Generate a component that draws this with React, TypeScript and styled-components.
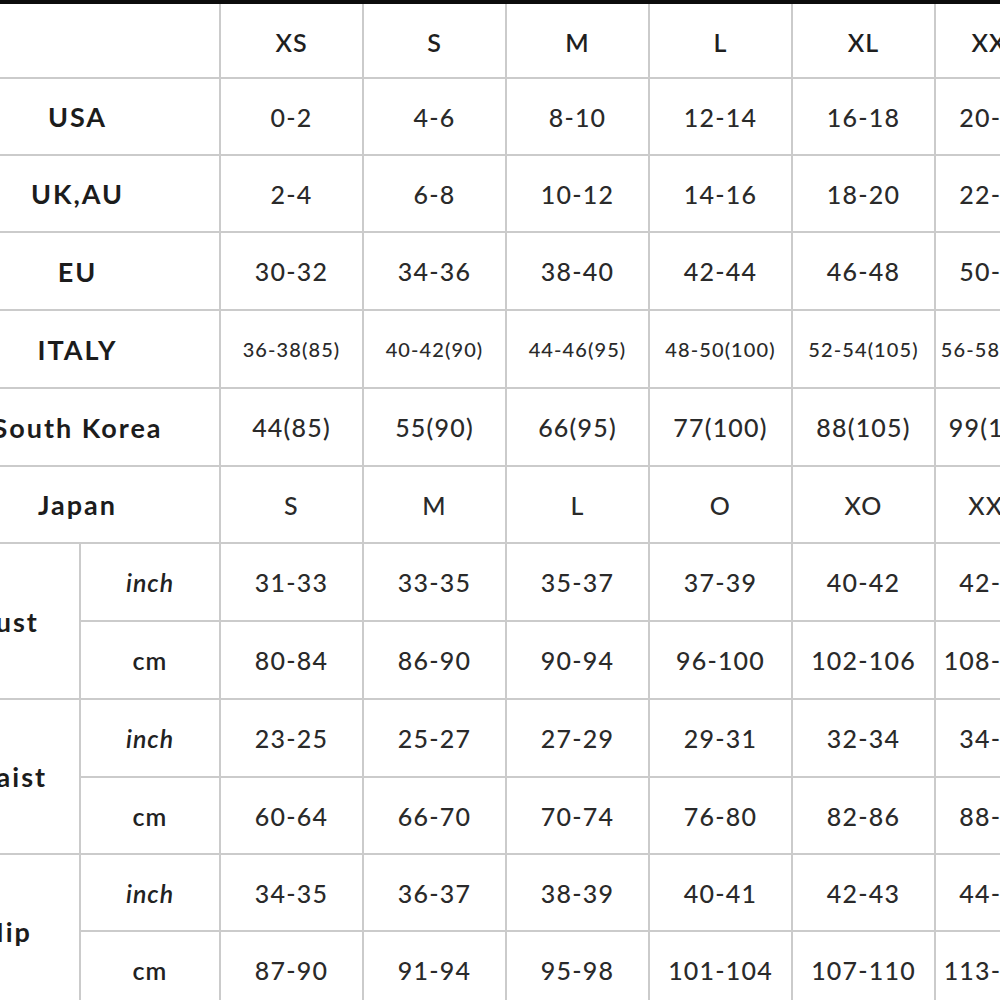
import React from "react";
import styled, { createGlobalStyle } from "styled-components";

const Global = createGlobalStyle`
  html, body { margin: 0; padding: 0; background: #ffffff; overflow: hidden; }
  body { font-family: Lato, "Open Sans", "Liberation Sans", sans-serif; color: #262626; }
`;

const Page = styled.div`
  width: 1000px;
  height: 1000px;
  overflow: hidden;
  background: #fff;
  display: flex;
  flex-direction: column;
`;

const TopBar = styled.div`
  height: 4px;
  flex: 0 0 4px;
  background: #0c0c0c;
`;

const Viewport = styled.div`
  flex: 1;
  overflow: hidden;
`;

const Grid = styled.div`
  margin-left: -64px;
  width: max-content;
  display: grid;
  grid-template-columns: 143px 138px repeat(5, 141px) 120px;
  grid-template-rows: 73px 75px 75px 76px 76px 76px 75px 76px 76px 76px 75px 75px 76px;
  gap: 2px;
  background: #cbcbcb;
`;

const Cell = styled.div`
  background: #fff;
  display: flex;
  align-items: center;
  justify-content: center;
  white-space: nowrap;
`;

const Corner = styled(Cell)`
  grid-column: span 2;
`;

const Head = styled(Cell)`
  font-size: 25px;
  font-weight: 600;
  letter-spacing: 1px;
  color: #1f1f1f;
  padding-top: 2px;
`;

const RowLabel = styled(Cell)`
  grid-column: span 2;
  font-size: 27px;
  font-weight: 700;
  letter-spacing: 2px;
  color: #1c1c1c;
`;

const GroupLabel = styled(Cell)`
  grid-row: span 2;
  font-size: 27px;
  font-weight: 700;
  letter-spacing: 2px;
  color: #1c1c1c;
`;

const Unit = styled(Cell)`
  font-size: 25px;
  font-weight: 600;
  font-style: italic;
  letter-spacing: 1px;
  color: #222;
`;

const UnitPlain = styled(Unit)`
  font-style: normal;
`;

const Value = styled(Cell)<{ $small?: boolean }>`
  font-size: ${(p) => (p.$small ? "20px" : "25px")};
  font-weight: 500;
  letter-spacing: ${(p) => (p.$small ? "1.1px" : "1.2px")};
  color: #2a2a2a;
`;

const sizes = ["XS", "S", "M", "L", "XL", "XXL"];

const simpleRows: { label: string; values: string[]; small?: boolean }[] = [
  { label: "USA", values: ["0-2", "4-6", "8-10", "12-14", "16-18", "20-22"] },
  { label: "UK,AU", values: ["2-4", "6-8", "10-12", "14-16", "18-20", "22-24"] },
  { label: "EU", values: ["30-32", "34-36", "38-40", "42-44", "46-48", "50-52"] },
  {
    label: "ITALY",
    values: ["36-38(85)", "40-42(90)", "44-46(95)", "48-50(100)", "52-54(105)", "56-58(110)"],
    small: true,
  },
  { label: "South Korea", values: ["44(85)", "55(90)", "66(95)", "77(100)", "88(105)", "99(110)"] },
  { label: "Japan", values: ["S", "M", "L", "O", "XO", "XXO"] },
];

const groups: { label: string; inch: string[]; cm: string[] }[] = [
  {
    label: "Bust",
    inch: ["31-33", "33-35", "35-37", "37-39", "40-42", "42-44"],
    cm: ["80-84", "86-90", "90-94", "96-100", "102-106", "108-112"],
  },
  {
    label: "Waist",
    inch: ["23-25", "25-27", "27-29", "29-31", "32-34", "34-36"],
    cm: ["60-64", "66-70", "70-74", "76-80", "82-86", "88-92"],
  },
  {
    label: "Hip",
    inch: ["34-35", "36-37", "38-39", "40-41", "42-43", "44-45"],
    cm: ["87-90", "91-94", "95-98", "101-104", "107-110", "113-116"],
  },
];

export default function App() {
  return (
    <Page>
      <Global />
      <TopBar />
      <Viewport>
        <Grid>
          <Corner />
          {sizes.map((s) => (
            <Head key={s}>{s}</Head>
          ))}
          {simpleRows.map((r) => (
            <React.Fragment key={r.label}>
              <RowLabel>{r.label}</RowLabel>
              {r.values.map((v, i) => (
                <Value key={i} $small={r.small}>
                  {v}
                </Value>
              ))}
            </React.Fragment>
          ))}
          {groups.map((g) => (
            <React.Fragment key={g.label}>
              <GroupLabel>{g.label}</GroupLabel>
              <Unit>inch</Unit>
              {g.inch.map((v, i) => (
                <Value key={"i" + i}>{v}</Value>
              ))}
              <UnitPlain>cm</UnitPlain>
              {g.cm.map((v, i) => (
                <Value key={"c" + i}>{v}</Value>
              ))}
            </React.Fragment>
          ))}
        </Grid>
      </Viewport>
    </Page>
  );
}
